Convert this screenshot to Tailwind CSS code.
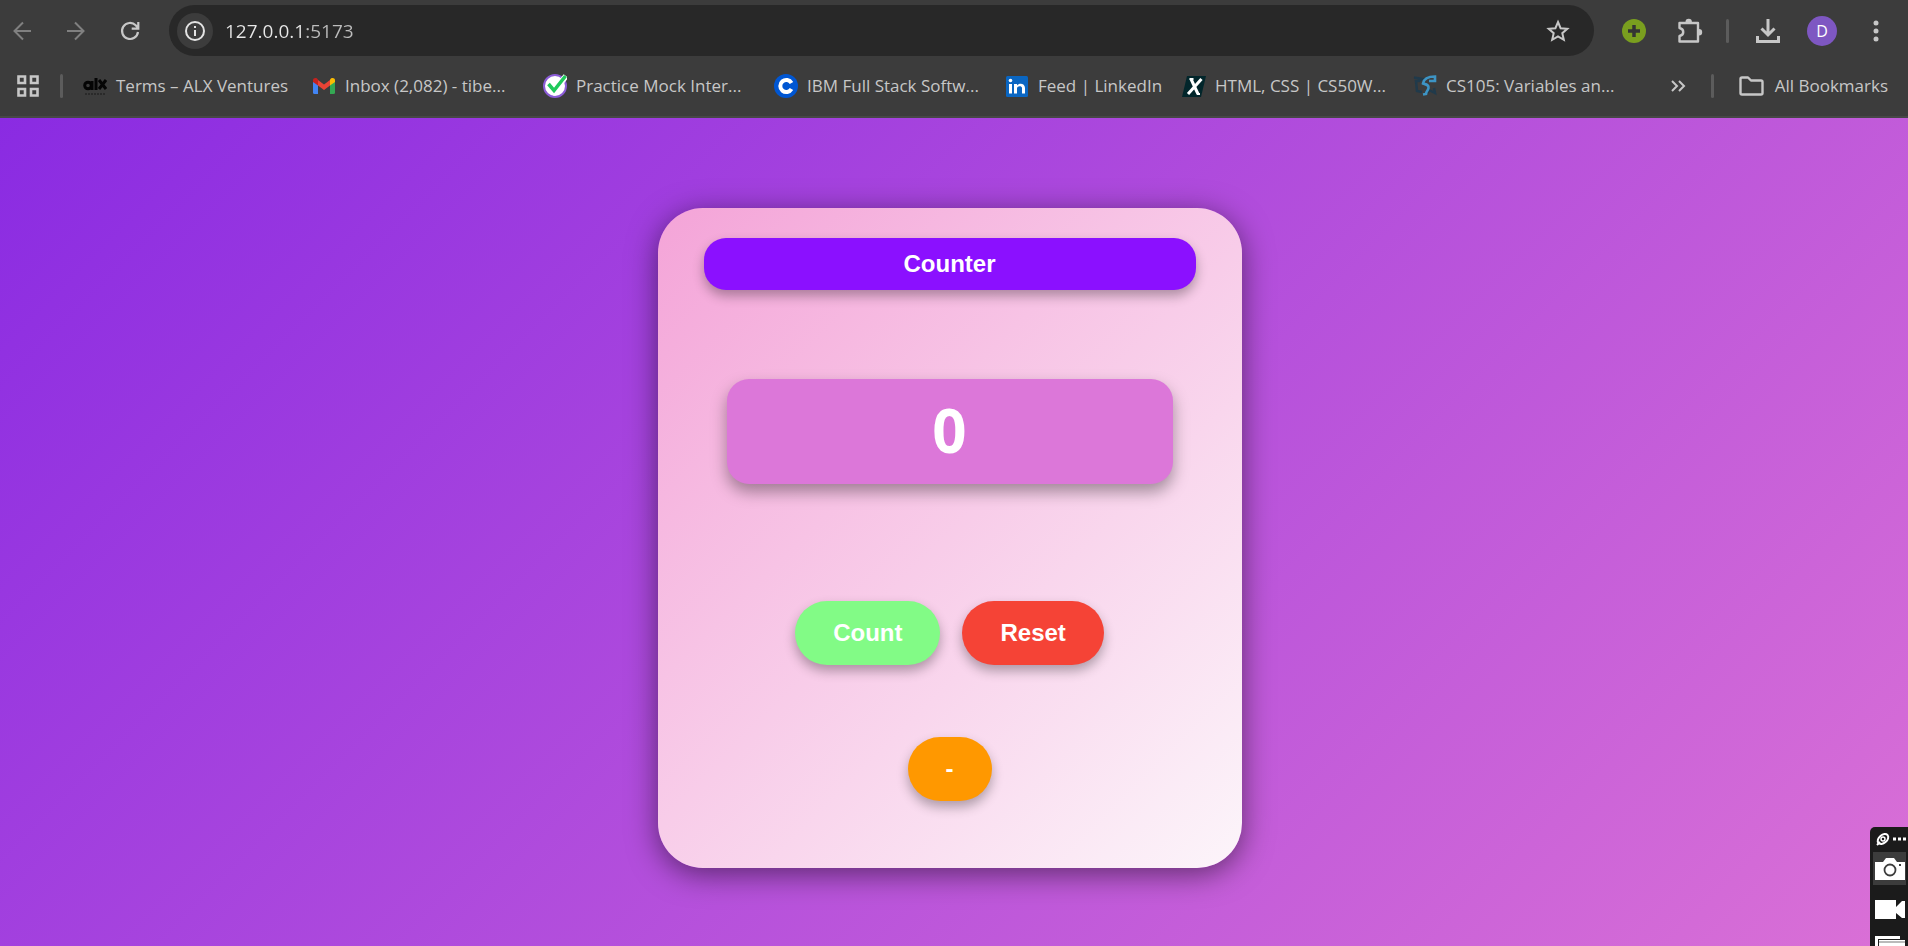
<!DOCTYPE html>
<html lang="en">
<head>
<meta charset="utf-8">
<title>Counter</title>
<script src="https://cdn.jsdelivr.net/npm/@tailwindcss/browser@4"></script>
</head>
<body class="flex h-screen flex-col overflow-hidden bg-[#3c3c3c] font-['Open_Sans','Noto_Sans',sans-serif] text-[#c7c7c7]">
<header class="shrink-0 border-b-2 border-[#474747]">
  <!-- Toolbar -->
  <div class="flex h-[61px] items-center pr-[26px] pl-[11px]">
    <nav class="flex items-center gap-8 pr-7" aria-label="History">
      <button aria-label="Back" class="text-[#808080]"><svg width="22" height="22" viewBox="0 0 22 22" fill="none" stroke="currentColor" stroke-width="2"><path d="M20 11H3M12 2.500 3.500 11l8.500 8.500"/></svg></button>
      <button aria-label="Forward" class="text-[#808080]"><svg width="22" height="22" viewBox="0 0 22 22" fill="none" stroke="currentColor" stroke-width="2"><path d="M2 11h17M10 2.500l8.500 8.500-8.500 8.500"/></svg></button>
      <button aria-label="Reload"><svg width="22" height="22" viewBox="0 0 22 22" fill="none" stroke="currentColor" stroke-width="2.200"><path d="M19 12a8 8 0 1 1-2.300-6.700L19 7.800M19.300 2v6.700h-6.600"/></svg></button>
    </nav>
    <div class="flex h-[51px] flex-1 items-center rounded-full bg-[#282828] px-2">
      <button aria-label="Site information" class="grid size-9 shrink-0 place-items-center rounded-full bg-[#3c3c3c] text-[#e3e3e3]"><svg width="22" height="22" viewBox="0 0 22 22" fill="none" stroke="currentColor" stroke-width="2"><circle cx="11" cy="11" r="9"/><path d="M11 10v6M11 6v2"/></svg></button>
      <input type="text" value="127.0.0.1:5173" aria-label="Address" class="ml-3 h-8 min-w-0 flex-1 bg-linear-to-r from-[#e8e8e8] from-[82px] to-[#bdbdbd] to-[82px] bg-clip-text text-[19px] text-transparent outline-none">
      <button aria-label="Bookmark this page" class="mr-4"><svg width="24" height="24" viewBox="0 0 24 24" fill="none" stroke="currentColor" stroke-width="2"><path d="m12 3 2.600 6.200 6.700.6-5 4.400 1.500 6.600L12 17.300l-5.800 3.500 1.500-6.600-5-4.400 6.700-.6z"/></svg></button>
    </div>
    <div class="flex items-center pl-7">
      <button aria-label="Add extension item"><svg width="24" height="24" viewBox="0 0 24 24"><circle cx="12" cy="12" r="12" fill="#7a9f1f"/><path d="M12 6v12M6 12h12" stroke="#343434" stroke-width="3.500"/></svg></button>
      <button aria-label="Extensions" class="ml-[30px]"><svg width="28" height="26" viewBox="0 0 28 26" fill="none" stroke="currentColor" stroke-width="2.400" stroke-linejoin="round"><path d="M3.500 5h18.500v18.500H3.500v-5.500c5-1 5-7 0-8z"/><path d="M9.500 4a3.200 3.200 0 0 1 6.400 0zM23 11a3.200 3.200 0 0 1 0 6.400z" fill="currentColor" stroke="none"/></svg></button>
      <span class="ml-[22px] h-6 w-[3px] rounded-full bg-[#5c5c5c]"></span>
      <button aria-label="Downloads" class="ml-[26px]"><svg width="26" height="26" viewBox="0 0 26 26" fill="none" stroke="currentColor" stroke-width="3"><path d="M13 1v16M6.500 10.500 13 17l6.500-6.500M2.500 18v5.500h21V18"/></svg></button>
      <button aria-label="Profile" class="ml-[26px] grid size-[30px] place-items-center rounded-full bg-[#7e57c2] text-base text-white">D</button>
      <button aria-label="Menu" class="ml-[33px]"><svg width="12" height="24" viewBox="0 0 12 24" fill="currentColor"><circle cx="6" cy="4" r="2.500"/><circle cx="6" cy="12" r="2.500"/><circle cx="6" cy="20" r="2.500"/></svg></button>
    </div>
  </div>
  <!-- Bookmarks bar -->
  <div class="flex h-[55px] items-center pr-5 pb-[5px] pl-4 text-[17px] whitespace-nowrap">
    <button aria-label="Apps"><svg width="24" height="24" viewBox="0 0 24 24" fill="none" stroke="currentColor" stroke-width="2.600"><path d="M2.500 2.500h6.500v6.500H2.500zM15 2.500h6.500v6.500H15zM2.500 15h6.500v6.500H2.500zM15 15h6.500v6.500H15z"/></svg></button>
    <span class="mx-5 h-6 w-[3px] rounded-full bg-[#5c5c5c]"></span>
    <a href="#" class="flex w-[229px] items-center gap-[9px]"><svg width="24" height="24" viewBox="0 0 24 24" fill="none" stroke="#050505"><circle cx="5" cy="11.500" r="3.300" stroke-width="3"/><path d="M9 7v9M13 4v12" stroke-width="3"/><path d="m16 6 7 9M23 6l-7 9" stroke-width="3"/><path d="M2 20h21" stroke="#252525" stroke-width="1.500" stroke-dasharray="2 1"/></svg>Terms – ALX Ventures</a>
    <a href="#" class="flex w-[231px] items-center gap-[9px]"><svg width="24" height="24" viewBox="0 0 24 24"><path d="M1 6v12.500A1.500 1.500 0 0 0 2.500 20H6V9z" fill="#4285f4"/><path d="M23 6v12.500a1.500 1.500 0 0 1-1.500 1.500H18V9z" fill="#34a853"/><path d="m6 6 6 4.500L18 6v5.500L12 16l-6-4.500z" fill="#ea4335"/><path d="M1 8V6.500C1 4 3.500 3.500 5 4.500L6 5.500v6z" fill="#c5221f"/><path d="M23 8V6.500C23 4 20.500 3.500 19 4.500l-1 1v6z" fill="#fbbc04"/></svg>Inbox (2,082) - tibe...</a>
    <a href="#" class="flex w-[231px] items-center gap-[9px]"><svg width="24" height="24" viewBox="0 0 24 24"><circle cx="12" cy="12" r="11" fill="#fff" stroke="#8b5cd6" stroke-width="2"/><path d="m6 10 5 7L23 2" fill="none" stroke="#fff" stroke-width="6"/><path d="m5.500 10 5.500 6.500L22.500 2" fill="none" stroke="#1fc95b" stroke-width="3.500"/></svg>Practice Mock Inter...</a>
    <a href="#" class="flex w-[231px] items-center gap-[9px]"><svg width="24" height="24" viewBox="0 0 24 24"><circle cx="12" cy="12" r="12" fill="#0056d2"/><path d="M17.500 9A6 6 0 1 0 17.500 15" fill="none" stroke="#fff" stroke-width="4"/></svg>IBM Full Stack Softw...</a>
    <a href="#" class="flex w-[177px] items-center gap-[9px]"><svg width="24" height="24" viewBox="0 0 24 24"><rect x="1" y="2" width="22" height="21" rx="1.500" fill="#0a66c2"/><path d="M4 10h3v9.500H4zM9 10h3v1.500c2-3 8-2.500 8 2.500v5.500h-3V14c0-2.500-5-2.500-5 .5v5H9z" fill="#fff"/><circle cx="5.500" cy="6.500" r="1.800" fill="#fff"/></svg>Feed | LinkedIn</a>
    <a href="#" class="flex w-[231px] items-center gap-[9px]"><svg width="24" height="24" viewBox="0 0 24 24"><path d="M5 2h19l-5 21H0z" fill="#02262b"/><path d="m9 5 7 15M19.500 5 6 20" fill="none" stroke="#fff" stroke-width="3"/><path d="M7.500 5h4M15 20h3" stroke="#fff" stroke-width="2"/></svg>HTML, CSS | CS50W...</a>
    <a href="#" class="flex items-center gap-[9px]"><svg width="24" height="24" viewBox="0 0 24 24" fill="none"><path d="M1 3.500 9 5l-3 2H3l1 10 5 1M14 19l2-3 6 3-1-5" stroke="#203a4b" stroke-width="2.500"/><path d="M16 7h6V2.500C16 2.500 11 4 10 9.500c2 1 5 .5 5.500 3.500.5 3-2 3-2.500 7l-3 .5" stroke="#3d94c4" stroke-width="2.600"/></svg>CS105: Variables an...</a>
    <button aria-label="More bookmarks" class="ml-auto"><svg width="16" height="14" viewBox="0 0 16 14" fill="none" stroke="currentColor" stroke-width="2"><path d="m2 2 5 5-5 5M9 2l5 5-5 5"/></svg></button>
    <span class="mx-[25px] h-6 w-[3px] rounded-full bg-[#5c5c5c]"></span>
    <button class="flex items-center gap-[11px]"><svg width="25" height="20" viewBox="0 0 25 20" fill="none" stroke="currentColor" stroke-width="2.400" stroke-linejoin="round"><path d="M1.500 3q0-1.500 1.500-1.500h6L12 4.500h10q1.500 0 1.500 1.500v11q0 1.500-1.500 1.500H3q-1.500 0-1.500-1.500z"/></svg>All Bookmarks</button>
  </div>
</header>

<main class="flex flex-1 items-start justify-center bg-linear-[135deg] from-[#8a2be2] to-[#da70d6] pt-[90px] pr-[9px] font-['Liberation_Sans',Arial,sans-serif] font-bold text-white">
  <section class="flex w-[584px] flex-col items-center rounded-[45px] bg-linear-[135deg] from-[#f4a4d8] to-[#fcf5fa] px-[46px] pt-[30px] pb-[67px] shadow-[0_6px_30px_rgb(0_0_0/0.5)]">
    <h1 class="w-full rounded-[22px] bg-[#8b10ff] text-center text-2xl leading-[52px] shadow-[0_6px_12px_rgb(0_0_0/0.3)]">Counter</h1>
    <output class="mt-[89px] w-[446px] rounded-[22px] bg-[#dc77d9] pb-[2px] text-center font-['Open_Sans','Noto_Sans',sans-serif] text-[60px] leading-[103px] shadow-[0_8px_16px_rgb(0_0_0/0.35)]">0</output>
    <div class="mt-[117px] flex gap-[22px] text-2xl leading-[64px]">
      <button class="rounded-full bg-[#82fb86] px-[38px] shadow-[0_6px_12px_rgb(0_0_0/0.3)]">Count</button>
      <button class="rounded-full bg-[#f54336] px-[38px] shadow-[0_6px_12px_rgb(0_0_0/0.3)]">Reset</button>
    </div>
    <button aria-label="Decrease" class="mt-[72px] rounded-[32px] bg-[#ff9800] px-[38px] text-2xl leading-[64px] shadow-[0_6px_12px_rgb(0_0_0/0.3)]">-</button>
  </section>
</main>

<!-- Floating capture widget -->
<aside class="absolute right-0 bottom-0 flex h-[119px] w-[38px] flex-col items-center overflow-hidden rounded-tl-[5px] bg-[#1b1b1b] pt-[5px] pl-px text-white">
  <button aria-label="Options"><svg width="32" height="15" viewBox="0 0 32 15" fill="none" stroke="currentColor"><ellipse cx="9" cy="7" rx="6" ry="4" transform="rotate(-40 9 7)" stroke-width="2"/><circle cx="9" cy="7" r="2" stroke-width="1.500"/><path d="m3 13 3-3" stroke-width="2"/><path d="M19 7h13" stroke-width="3" stroke-dasharray="3 2"/></svg></button>
  <button aria-label="Take screenshot" class="mt-[5px] grid h-[33px] w-[33px] shrink-0 place-items-center bg-[#3c3c3c]"><svg width="30" height="24" viewBox="0 0 30 24"><path d="M0 5h8l3-4h8l3 4h8v18H0z" fill="currentColor"/><circle cx="15" cy="13" r="5.500" fill="none" stroke="#3c3c3c" stroke-width="1.800"/><path d="M24 8h2" stroke="#3c3c3c" stroke-width="2"/></svg></button>
  <button aria-label="Record video" class="mt-[15px]"><svg width="30" height="20" viewBox="0 0 30 20" fill="currentColor"><path d="M0 0h21v7l6-6h3v17h-3l-6-5v6H0z"/></svg></button>
  <button aria-label="Gallery" class="mt-[16px]"><svg width="30" height="20" viewBox="0 0 30 20"><path d="M0 0h25v3H3v17H0z" fill="currentColor"/><path d="M4 4h26v16H4z" fill="currentColor"/><path d="M4 6h26" stroke="#777" stroke-width="1"/></svg></button>
</aside>
</body>
</html>
